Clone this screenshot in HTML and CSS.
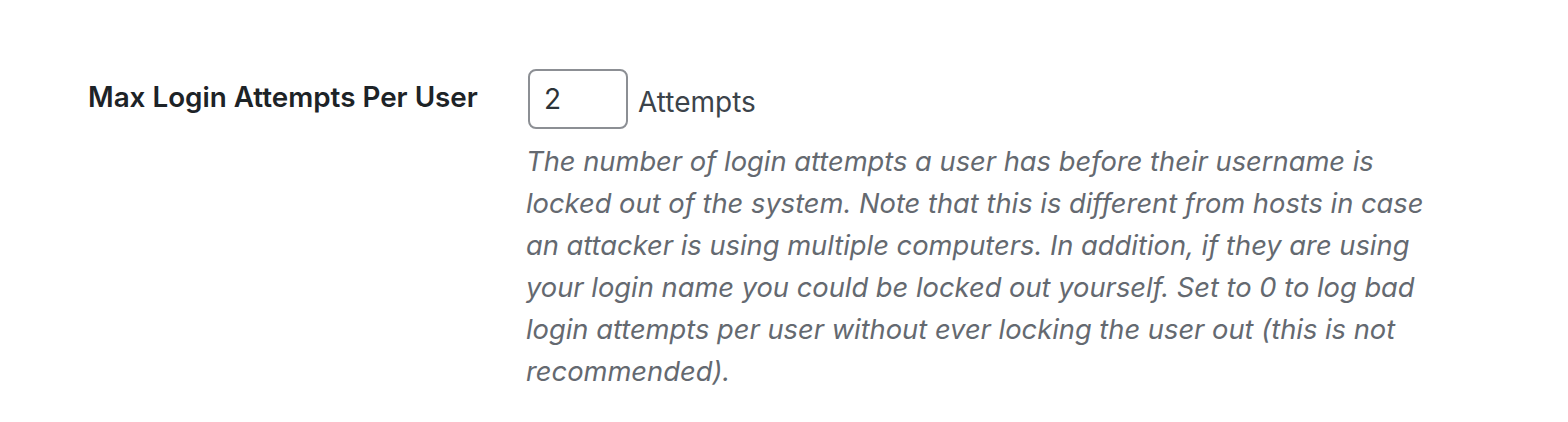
FILE: index.html
```html
<!DOCTYPE html>
<html lang="en">
<head>
    <meta charset="UTF-8">
    <title>Lockout Settings</title>
    <link rel="stylesheet" href="styles.css">
</head>
<body>
    <div class="settings">
        <!-- tail of the previous setting's description -->
        <div class="prev-tail">
            <p class="description">attempts without locking out the host.</p>
        </div>

        <div class="setting-row">
            <div class="setting-label">
                <label for="max-user">Max Login Attempts Per User</label>
            </div>
            <div class="setting-field">
                <div class="field-line">
                    <input type="text" id="max-user" class="small-text" value="2">
                    <span class="unit">Attempts</span>
                </div>
                <p class="description">The number of login attempts a user has before their username is locked out of the system. Note that this is different from hosts in case an attacker is using multiple computers. In addition, if they are using your login name you could be locked out yourself. Set to 0 to log bad login attempts per user without ever locking the user out (this is not recommended).</p>
            </div>
        </div>
    </div>
</body>
</html>
```

FILE: styles.css
```css
body {
    margin: 0;
    background: #fff;
    font-family: Inter, "Open Sans", sans-serif;
    color: #1d2327;
}
.settings {
    padding-left: 88px;
}
.prev-tail {
    margin-left: 438px;
    margin-top: -33px;
    height: 33px;
    overflow: hidden;
}
.description {
    margin: 0;
    font-size: 27.3px;
    line-height: 42px;
    font-style: italic;
    color: #646970;
    max-width: 905px;
}
.setting-row {
    display: flex;
    padding-top: 33px;
}
.setting-label {
    width: 438px;
    flex-shrink: 0;
    padding-top: 47px;
}
.setting-label label {
    font-size: 27.8px;
    font-weight: 600;
    color: #1d2327;
}
.setting-field {
    padding-top: 36px;
}
.field-line {
    display: flex;
    align-items: center;
    gap: 10px;
    margin-bottom: 12px;
}
.small-text {
    width: 100px;
    height: 60px;
    box-sizing: border-box;
    padding: 0 14px;
    margin-left: 2px;
    border: 2px solid #8c8f94;
    border-radius: 8px;
    font-family: inherit;
    font-size: 28px;
    color: #2c3338;
    outline: none;
}
.unit {
    font-size: 28px;
    color: #3c434a;
    padding-top: 6px;
}
```
